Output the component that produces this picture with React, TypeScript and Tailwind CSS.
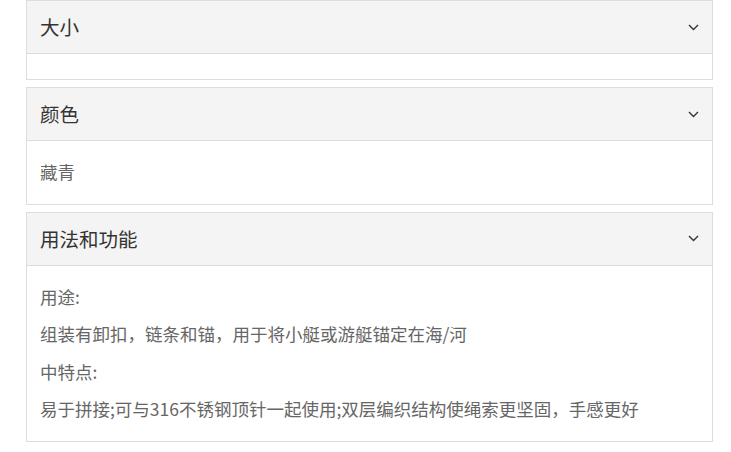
import React, { useState } from 'react';

type Section = {
  title: string;
  lines: string[];
};

const sections: Section[] = [
  { title: '大小', lines: [] },
  { title: '颜色', lines: ['藏青'] },
  {
    title: '用法和功能',
    lines: [
      '用途:',
      '组装有卸扣，链条和锚，用于将小艇或游艇锚定在海/河',
      '中特点:',
      '易于拼接;可与316不锈钢顶针一起使用;双层编织结构使绳索更坚固，手感更好',
    ],
  },
];

const Chevron: React.FC = () => (
  <svg width="11" height="7" viewBox="0 0 11 7" fill="none">
    <polyline points="1,1 5.5,5.5 10,1" stroke="#333" strokeWidth="1.4" />
  </svg>
);

const App: React.FC = () => {
  const [open, setOpen] = useState<boolean[]>(sections.map(() => true));

  const toggle = (i: number) => {
    setOpen(prev => prev.map((v, idx) => (idx === i ? !v : v)));
  };

  return (
    <div
      className="w-[731px] h-[452px] bg-white pl-[26px] pr-[18px] flex flex-col gap-[7px]"
      style={{ fontFamily: '"Noto Sans CJK SC", "Noto Sans", sans-serif' }}
    >
      {sections.map((s, i) => (
        <div key={s.title} className="border border-[#dddddd] bg-white">
          <button
            onClick={() => toggle(i)}
            className="w-full h-[52px] bg-[#f4f4f4] flex items-center justify-between pl-[13px] pr-[13px] text-[19.5px] text-[#333333] cursor-pointer"
          >
            <span>{s.title}</span>
            <Chevron />
          </button>
          {open[i] && (
            <div className="border-t border-[#dddddd] pt-[12px] pb-[13px] px-[13px] text-[17.5px] leading-[37.5px] text-[#666666]">
              {s.lines.map(line => (
                <p key={line}>{line}</p>
              ))}
            </div>
          )}
        </div>
      ))}
    </div>
  );
};

export default App;
